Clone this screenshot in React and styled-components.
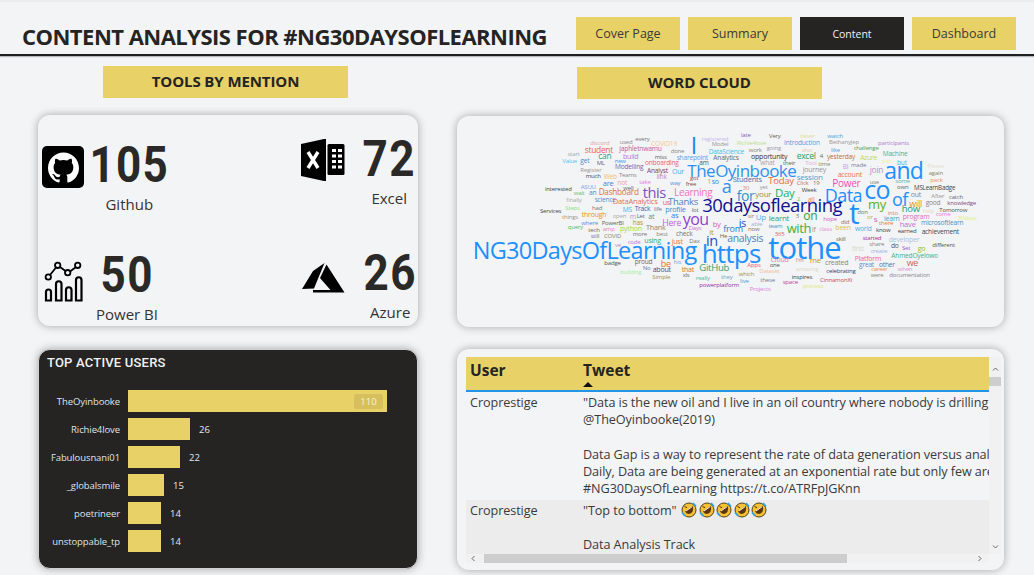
import React from "react";
import styled, { createGlobalStyle } from "styled-components";
import { SiGithub } from "react-icons/si";

const Global = createGlobalStyle`
  html, body { margin: 0; padding: 0; background: #f3f4f6; }
  body { font-family: "Open Sans", "Noto Sans", sans-serif; color: #252423; }
`;
const Y = "#e8d166";
const Page = styled.div`width: 1034px; height: 575px; overflow: hidden; background: #f3f4f6; border-top: 2px solid #ececee; box-sizing: border-box;`;
const Header = styled.header`display: flex; justify-content: space-between; height: 54px; box-sizing: border-box; padding: 15px 18px 0 22px; border-bottom: 2px solid #1f1f1f; box-shadow: 0 1px 1px #b5b7bb;`;
const Title = styled.h1`margin: 5px 0 0; font-size: 22px; line-height: 28px; font-weight: 700; letter-spacing: -0.52px; white-space: nowrap;`;
const Nav = styled.nav`display: flex; gap: 8px; height: 33px;`;
const NavButton = styled.div`
  width: 104px; display: flex; align-items: center; justify-content: center;
  background: ${p => (p.$active ? "#252423" : Y)}; color: ${p => (p.$active ? "#f2f2f2" : "#3a3a38")};
  font-size: ${p => (p.$active ? "10.5px" : "12.5px")};
`;
const Body = styled.main`display: grid; grid-template-columns: 380px 547px; column-gap: 39px; padding-left: 38px;`;
const Column = styled.section`display: flex; flex-direction: column; align-items: flex-start;`;
const SectionBar = styled.div`
  width: 245px; height: 32px; box-sizing: border-box; padding-bottom: 2px; margin: ${p => p.$top}px 0 17px ${p => p.$left}px; background: ${Y};
  display: flex; align-items: center; justify-content: center; font-size: 15px; font-weight: 700; letter-spacing: -0.1px;
`;
const Card = styled.div`
  width: 100%; height: ${p => p.$h}px; margin-top: ${p => p.$top || 0}px; box-sizing: border-box; position: relative;
  border-radius: 12px; background: #f3f4f6; box-shadow: 0 0 9px rgba(0,0,0,.32); overflow: hidden;
`;
const StatsGrid = styled.div`display: grid; grid-template-columns: 259px 117px; grid-template-rows: 118px 93px; padding-left: 4px;`;
const Stat = styled.div`display: flex; align-items: flex-start; gap: ${p => p.$gap}px; padding-top: ${p => p.$pad}px;`;
const StatIcon = styled.div`display: flex; margin-top: ${p => p.$top}px; width: ${p => p.$w}px; flex: none; justify-content: center;`;
const StatText = styled.div`display: flex; flex-direction: column; align-items: center;`;
const StatNum = styled.div`
  font-family: Roboto, sans-serif; font-weight: 700; font-size: 50px; line-height: 50px; color: #2a2928;
  transform: scaleX(.88); letter-spacing: 1.5px;
`;
const StatLabel = styled.div`font-size: 15px; line-height: 20px; margin-top: ${p => p.$top}px; color: #333;`;
const GithubBox = styled.div`
  width: 42px; height: 42px; border-radius: 5px; background: #000; color: #fff; display: flex; align-items: center; justify-content: center;
`;

const Cloud = styled.div`position: absolute; inset: 0;`;
const Word = styled.span`
  position: absolute; left: ${p => p.$x}px; top: ${p => p.$y}px; transform: translateY(-50%);
  font-size: ${p => p.$s}px; line-height: 1; color: ${p => p.$c}; white-space: nowrap; letter-spacing: -0.03em;
`;

const A = [
["discord",390,83,6,"#d9a9a9"],["used",479,80,6,"#8a8a8a"],["every",526,72,6,"#777"],["COVID19",573,86,6.6,"#f5c890"],["registered",725,72,6,"#c9b8f0"],["Model",755,88,6,"#999"],
["I",692,90,23,"#1e88e5"],["student",374,105,8.4,"#f06060"],["japhletnwamu",478,102,6.7,"#c060a0"],["done",632,107,6,"#888"],["DataScience",746,110,6.6,"#40c0e8"],["start",323,116,6,"#9aa"],
["can",415,124,8.3,"#20a080"],["build",489,122,7,"#c070e0"],["miss",584,125,6,"#666"],["sharepoint",650,128,6.6,"#60a0f0"],["Analytics",760,130,6.6,"#666"],["Value",307,137,6,"#50c0f0"],["get",361,138,6.6,"#4090d0"],
["ML",410,143,6,"#668"],["new",464,138,6,"#5090f0"],["onboarding",555,144,6.6,"#f06070"],["am",718,143,6.6,"#555"],["Register",361,164,6,"#999"],["Modelling",465,157,6.6,"#8060a0"],["Analyst",561,167,6.6,"#804060"],["Our",636,167,7,"#40b0f0"],
["TheOyinbooke",682,165,17,"#3090f0"],["much",377,183,6,"#446"],["Web",431,187,6.6,"#f0c070"],["Teams",477,180,6,"#888"],["link",590,187,6.6,"#c080d0"],["got",690,190,6,"#a05050"],["ASUU",362,215,6,"#80a0e0"],["not",472,203,6.6,"#f0a0b0"],
["take",538,200,6,"#e080e0"],["way",630,204,6,"#5090e0"],["free",677,208,6,"#805040"],["1",742,198,7,"#a0c030"],["so",755,198,7,"#4080e0"],["interested",255,221,6,"#444"],["wait",341,233,6,"#70c070"],["an",387,233,6.6,"#4090d0"],["well",490,218,6,"#666"],
["are",428,207,7.6,"#5080e0"],["Dashboard",416,232,8.2,"#e07030"],["this",548,230,14.7,"#8050c0"],["Learning",642,230,10,"#f070c0"],["a",785,212,18,"#3090f0"],["finally",319,254,6,"#aaa"],["science",404,256,6.6,"#5090d0"],["Services",240,287,6,"#445"],
["Steps",316,278,6,"#90e080"],["had",396,278,6,"#776"],["DataAnalytics",458,262,7.6,"#e07060"],["us",608,262,7,"#e06080"],["Thanks",624,261,9.5,"#5080c0"],["30daysoflearning",727,270,18.5,"#101090"],["things",306,305,6,"#998"],["through",365,296,7,"#f09020"],
["MS",488,286,6.6,"#40b0f0"],["Track",524,283,6.6,"#3060b0"],["life",582,283,6,"#777"],["profile",616,286,7.2,"#3090d0"],["lot",695,284,6,"#666"],["open",458,303,6,"#aaa"],["m",509,302,7,"#c090e0"],["Let",530,304,6,"#666"],["at",565,304,7,"#30a0a0"],["as",633,304,7.5,"#3080f0"],
["you",668,312,16,"#9040d0"],["query",323,337,6,"#50c060"],["where",364,323,6,"#5090e0"],["PowerBI",425,323,6,"#665"],["has",518,323,6.6,"#c09020"],["Here",607,323,8.7,"#c060e0"],["by",758,330,7.5,"#d060c0"],["tech",385,344,6,"#666"],["amp",428,341,6,"#e090a0"],["python",480,340,7,"#a0e040"],
["Thank",558,339,7.2,"#887"],["Days",686,338,6,"#d070d0"],["still",392,362,6,"#777"],["COVID",432,364,6,"#885"],["more",518,358,6,"#777"],["best",589,358,6,"#887"],["check",648,357,6.6,"#776"],["it",748,352,8,"#c0a000"],["He",779,362,6,"#665"],["from",790,340,9,"#2080d0"],
["using",553,376,7,"#30b070"],["just",635,377,7,"#e08020"],["Dax",688,379,6,"#776"],["in",738,378,14.5,"#2050c0"],["ve",465,389,6,"#c090c0"],["code",503,382,6,"#c070e0"],["NG30DaysOfLearning",38,407,23.5,"#1e90ff"],["https",725,413,26,"#1e90ff"],
["badge",433,443,6,"#555"],["proud",524,440,6.6,"#906050"],["be",602,443,9,"#f07020"],["his",641,442,6,"#80a0d0"],["No",548,458,6,"#7080b0"],["about",578,462,7,"#604080"],["that",665,462,7,"#c08030"],["GitHub",718,460,9.5,"#30a070"],["building",481,470,6,"#a0f0a0"],
["Simple",577,485,6,"#a09050"],["xls",668,482,5.8,"#666"],["really",707,489,6,"#50c0a0"],["they",783,485,6,"#80a0c0"],["powerplatform",718,510,6,"#9030b0"],
];
const B = [
["late",33,59,6,"#8060c0"],["Very",117,63,6,"#665"],["never",210,62,6,"#e0e090"],["watch",292,62,6,"#50a0e0"],["Richie4love",20,83,6,"#c0e090"],["Introduction",162,83,6.6,"#50a0e0"],["BethanyJep",297,81,6,"#999"],["participants",444,84,6,"#b080d0"],
["work",56,104,6,"#887"],["going",110,99,6,"#99a"],["also",215,104,6,"#e0d0c0"],["like",303,106,6,"#50a0e0"],["challenge",371,100,6,"#50a050"],["Machine",458,118,6.6,"#50b090"],["opportunity",63,122,7,"#333"],["excel",200,123,8.5,"#20a060"],["4",269,124,6,"#665"],["yesterday",291,125,6.6,"#c07040"],
["Azure",391,130,6.6,"#c0e040"],["part",455,137,6,"#f0f0a0"],["what",91,144,6.6,"#b0a0a0"],["their",159,143,6,"#665"],["Tool",226,143,6,"#e0b0e0"],["time",265,146,6,"#887"],["BI",338,155,6.6,"#c0a0e0"],["made",363,150,6,"#8080a0"],["but",501,143,6.6,"#50b0f0"],["Please",592,152,6,"#e8e0d0"],
["journey",218,161,7,"#999"],["join",419,165,8.5,"#c090d0"],["and",463,165,23,"#1e90ff"],["again",596,174,6,"#886"],["account",323,178,7,"#f07050"],["pack",601,194,6,"#f09060"],["Click",200,205,6,"#c07060"],["19",249,205,6,"#777"],["Today",115,198,9.5,"#e07030"],["session",200,186,8,"#50a0d0"],
["Students",8,196,7.5,"#5070a0"],["some",496,198,6,"#60b0a0"],["use",419,200,6,"#887"],["own",501,215,6,"#665"],["MSLearnBadge",552,218,6.2,"#444"],["Power",307,203,10,"#f050b0"],["30",38,218,6,"#e08080"],["yet",89,216,6,"#999"],["your",76,237,8,"#a09040"],["Week",215,226,6,"#444"],
["Day",135,235,11.5,"#20b060"],["out",542,238,7,"#888"],["After",604,243,6,"#999"],["catch",657,245,6,"#667"],["for",20,243,14,"#3090d0"],["Data",284,240,18,"#1e90ff"],["co",403,222,25,"#1e90ff"],["of",486,253,18,"#1e90ff"],["how",515,282,9.5,"#20a070"],["will",538,263,9,"#f09020"],["good",587,264,6.6,"#888"],
["knowledge",652,264,6,"#805080"],["2",201,252,6,"#90c040"],["all",233,253,7,"#f09020"],["my",414,267,13,"#60b020"],["Tomorrow",628,285,6,"#555"],["help",578,287,6,"#e8d8c8"],["come",617,297,6,"#e080e0"],["30days",684,308,6,"#e0f080"],["t",357,295,30,"#1e90ff"],["don",382,290,6,"#777"],
["into",473,293,6,"#d09070"],["or",411,306,6,"#b0b040"],["s",431,313,8,"#d060c0"],["learn",462,308,7,"#50a0d0"],["program",518,303,7,"#e070c0"],["on",220,303,12,"#30a040"],["sir",53,302,6,"#888"],["Up",77,306,8,"#50b0f0"],["learnt",116,308,8,"#40a060"],["3",197,302,6,"#776"],["hope",280,311,6,"#d060c0"],
["did",333,320,6,"#907070"],["been",316,335,7,"#e0c050"],["there",447,323,6,"#e08030"],["microsoftlearn",573,323,6.6,"#5090c0"],["is",26,322,11,"#2050c0"],["able",63,326,6,"#a0b0e0"],["team",116,333,6,"#5090c0"],["with",170,338,13,"#40b040"],["If",245,341,7,"#998"],["class",268,341,6,"#e090d0"],
["world",375,341,6.6,"#50b0e0"],["know",438,344,6,"#445"],["have",509,331,7.6,"#c070e0"],["earned",503,348,6,"#445"],["achievement",575,350,6.6,"#445"],["now",54,343,6,"#776"],["analysis",-8,368,10.4,"#5080c0"],["365",134,358,6,"#e06060"],["started",398,368,6,"#a03090"],["developer",476,371,7,"#b0c0e0"],
["skill",318,371,6,"#707030"],["tothe",115,395,31,"#1e90ff"],["first",366,400,7,"#d8d8c8"],["share",418,387,6,"#888"],["do",483,392,6.6,"#555"],["different",607,389,6,"#506040"],["Set",516,400,6,"#9060d0"],["go",563,400,7,"#90c020"],["create",422,407,6,"#a0b0e8"],["AhmedOyelowo",484,422,6.6,"#40b090"],
["Cloud",122,433,7,"#e080a0"],["I'm",197,436,6,"#c08080"],["me",239,439,7.8,"#c0a000"],["Platform",374,430,7,"#f060a0"],["we",530,441,9,"#d06060"],["created",285,442,7,"#887"],["Apps",52,449,6,"#f06060"],["one",119,449,6,"#555"],["great",387,449,6.6,"#6090d0"],["other",447,449,6.6,"#6070a0"],
["which",26,478,6,"#a09040"],["Dataset",88,469,6,"#f0c090"],["amazing",198,461,6,"#e0d8c8"],["when",503,461,6,"#e090d0"],["career",424,464,5.8,"#f09040"],["celebrating",289,469,6,"#404070"],["were",422,482,5.8,"#887"],["documentation",478,479,6,"#888"],["live",30,497,6,"#50a0e0"],["these",91,494,6,"#7080a0"],
["inspires",185,485,6,"#444"],["space",158,501,6,"#c040a0"],["CinnamonXi",270,494,6,"#c05060"],["process",218,513,6,"#e0e880"],["Projects",59,521,6,"#e080e0"],
];
const words = [
  ...A.map(([t, x, y, s, c]) => ({ t, x: 3 + x / 3, y: y / 3 - 1, s, c })),
  ...B.map(([t, x, y, s, c]) => ({ t, x: 273 + x / 3, y: y / 3 - 1, s, c })),
];

const DarkCard = styled(Card)`background: #252423; border: 1px solid #cfcfcf; padding: 5px 8px 0;`;
const ChartTitle = styled.h2`margin: 0 0 20px; font-family: Roboto, sans-serif; font-weight: 500; font-size: 13px; line-height: 15px; color: #f2f2f2; letter-spacing: .2px;`;
const BarList = styled.div`display: flex; flex-direction: column; gap: 6px;`;
const BarRow = styled.div`display: grid; grid-template-columns: 73px auto 1fr; column-gap: 8px; align-items: center; height: 22px; font-size: 9.5px; color: #dfe3ea;`;
const BarLabel = styled.div`text-align: right; white-space: nowrap; letter-spacing: -.1px;`;
const Bar = styled.div`height: 22px; background: ${Y}; display: flex; align-items: center; justify-content: flex-end; padding-right: 4px; box-sizing: border-box;`;
const BarValue = styled.div`font-size: 9.5px; padding-left: 1px; color: #e6e8ee;`;
const BarBadge = styled.div`width: 29px; height: 15px; border-radius: 2px; background: rgba(60,50,20,.1); color: #f7f1d6; font-size: 9.5px; display: flex; align-items: center; justify-content: center;`;

const TableGrid = styled.div`
  display: grid; grid-template-columns: 523px 12px; grid-template-rows: 197px 9px; height: 100%;
  box-sizing: border-box; padding: 8px 0 0 9px;
`;
const TableMain = styled.div`overflow: hidden; height: 197px;`;
const HeadRow = styled.div`display: grid; grid-template-columns: 113px 1fr; height: 35px; background: ${Y}; border-bottom: 2px solid #2196e8; box-sizing: border-box; padding-left: 4px; font-weight: 700; font-size: 15.5px; color: #252423;`;
const HeadCell = styled.div`padding-top: 2px; line-height: 22px; display: flex; flex-direction: column; align-items: flex-start;`;
const SortMark = styled.i`display: block; width: 0; height: 0; border-left: 5.5px solid transparent; border-right: 5.5px solid transparent; border-bottom: 5px solid #111; margin-top: 1px;`;
const Row = styled.div`display: grid; grid-template-columns: 113px 1fr; padding: 2px 0 2px 4px; background: ${p => (p.$alt ? "#ececec" : "transparent")}; font-size: 12.65px; line-height: 17.3px; color: #3b3a39; letter-spacing: -.08px;`;
const Cell = styled.div`white-space: pre; overflow: hidden;`;
const Emoji = styled.svg`vertical-align: -3px; margin-left: 1.5px;`;
const VScroll = styled.div`display: flex; flex-direction: column; align-items: center; justify-content: space-between; height: 197px; background: #f1f1f2; box-sizing: border-box; padding: 9px 0 4px;`;
const VThumb = styled.div`width: 100%; height: 9px; background: #cdcdcd; margin-bottom: auto; margin-top: 4px;`;
const HScroll = styled.div`display: flex; align-items: center; background: #f1f1f2; height: 9px; padding: 0 6px 0 4px; gap: 7px;`;
const HThumb = styled.div`width: 363px; height: 9px; background: #cdcdcd; margin-right: auto;`;
const Chevron = styled.svg`display: block; flex: none;`;

const GithubIcon = () => <GithubBox><SiGithub size={31} /></GithubBox>;
const ExcelIcon = () => (
  <svg width="44" height="42" viewBox="6 4 44 42">
    <path d="M6 9 L29 4 H31 V46 H29 L6 41 Z" fill="#000" />
    <path d="M13 17 L23 33 M23 17 L13 33" stroke="#fff" strokeWidth="3.4" />
    <rect x="32.500" y="9" width="17" height="31" rx="1.500" fill="#000" />
    <path d="M37 14h4v3h-4zM43 14h4v3h-4zM37 19.500h4v3h-4zM43 19.500h4v3h-4zM37 25h4v3h-4zM43 25h4v3h-4zM37 30.500h4v3h-4zM43 30.500h4v3h-4z" fill="#fff" />
  </svg>
);
const PowerBIIcon = () => (
  <svg width="39" height="43" viewBox="3 3 39 43" fill="none" stroke="#000" strokeWidth="1.8">
    <path d="M9 18 L15 10.500 M19 10 L24.500 14 M29 14.500 L35 10" />
    <circle cx="7.300" cy="20" r="2.700" /><circle cx="16.700" cy="8.300" r="2.700" /><circle cx="26.700" cy="15.700" r="2.700" /><circle cx="36.700" cy="8.300" r="2.700" />
    <path strokeWidth="2.2" d="M5 43.500 V35 a2.500 2.500 0 0 1 5 0 V43.500 Z M15 43.500 V27 a2.700 2.700 0 0 1 5.500 0 V43.500 Z M25 43.500 V33 a2.700 2.700 0 0 1 5.500 0 V43.500 Z M35 43.500 V23 a2.700 2.700 0 0 1 5.500 0 V43.500 Z" />
  </svg>
);
const AzureIcon = () => (
  <svg width="44" height="32" viewBox="4 4 44 32">
    <path d="M27.500 5 L16 13 L5 31 L17 30.500 Z M29.500 6.500 L47.500 34.500 L16 34.500 L16 32 L33.500 32 L23 20 Z" fill="#000" />
  </svg>
);
const LaughEmoji = () => (
  <Emoji width="16" height="16" viewBox="0 0 16 16">
    <circle cx="8" cy="8" r="7" fill="#f6c030" stroke="#4f4320" strokeWidth="1" />
    <path d="M4 9.500 L11.500 4 Q13.500 9 9.500 11.500 Q6 13 4 9.500 Z" fill="#5a3410" />
    <path d="M5 9 L11 4.800" stroke="#fff" strokeWidth=".9" />
    <path d="M3.500 4.500 l2.500 1.200" stroke="#5a3410" strokeWidth="1" />
    <path d="M1 10.500 l3 3.500 M12 1 l3 3.500" stroke="#2aa3e8" strokeWidth="1.800" />
  </Emoji>
);
const Chev = ({ d }) => (
  <Chevron width="7" height="7" viewBox="0 0 7 7" fill="none" stroke="#666" strokeWidth="1">
    <path d={d} />
  </Chevron>
);

const users = [
  ["TheOyinbooke", 259, 110], ["Richie4love", 62, 26], ["Fabulousnani01", 52, 22],
  ["_globalsmile", 36, 15], ["poetrineer", 33, 14], ["unstoppable_tp", 33, 14],
];

export default function App() {
  return (
    <Page>
      <Global />
      <Header>
        <Title>CONTENT ANALYSIS FOR #NG30DAYSOFLEARNING</Title>
        <Nav>
          <NavButton>Cover Page</NavButton>
          <NavButton>Summary</NavButton>
          <NavButton $active>Content</NavButton>
          <NavButton>Dashboard</NavButton>
        </Nav>
      </Header>
      <Body>
        <Column>
          <SectionBar $top={10} $left={65}>TOOLS BY MENTION</SectionBar>
          <Card $h={211}>
            <StatsGrid>
              <Stat $gap={0} $pad={25}>
                <StatIcon $w={42} $top={6}><GithubIcon /></StatIcon>
                <StatText><StatNum>105</StatNum><StatLabel $top={4}>Github</StatLabel></StatText>
              </Stat>
              <Stat $gap={14} $pad={19}>
                <StatIcon $w={44} $top={5}><ExcelIcon /></StatIcon>
                <StatText><StatNum>72</StatNum><StatLabel $top={4}>Excel</StatLabel></StatText>
              </Stat>
              <Stat $gap={12} $pad={17}>
                <StatIcon $w={42} $top={10}><PowerBIIcon /></StatIcon>
                <StatText><StatNum>50</StatNum><StatLabel $top={4}>Power BI</StatLabel></StatText>
              </Stat>
              <Stat $gap={15} $pad={15}>
                <StatIcon $w={44} $top={14}><AzureIcon /></StatIcon>
                <StatText><StatNum>26</StatNum><StatLabel $top={4}>Azure</StatLabel></StatText>
              </Stat>
            </StatsGrid>
          </Card>
          <DarkCard $h={220} $top={23}>
            <ChartTitle>TOP ACTIVE USERS</ChartTitle>
            <BarList>
              {users.map(([n, w, v], i) => (
                <BarRow key={n}>
                  <BarLabel>{n}</BarLabel>
                  <Bar style={{ width: w }}>{i === 0 && <BarBadge>{v}</BarBadge>}</Bar>
                  {i !== 0 && <BarValue>{v}</BarValue>}
                </BarRow>
              ))}
            </BarList>
          </DarkCard>
        </Column>
        <Column>
          <SectionBar $top={11} $left={120}>WORD CLOUD</SectionBar>
          <Card $h={211}>
            <Cloud>
              {words.map((w, i) => (
                <Word key={i} $x={w.x} $y={w.y} $s={w.s} $c={w.c}>{w.t}</Word>
              ))}
            </Cloud>
          </Card>
          <Card $h={221} $top={22}>
            <TableGrid>
              <TableMain>
                <HeadRow>
                  <HeadCell>User</HeadCell>
                  <HeadCell>Tweet<SortMark /></HeadCell>
                </HeadRow>
                <Row>
                  <Cell>Croprestige</Cell>
                  <Cell>{`"Data is the new oil and I live in an oil country where nobody is drilling
@TheOyinbooke(2019)

Data Gap is a way to represent the rate of data generation versus analysis
Daily, Data are being generated at an exponential rate but only few are
#NG30DaysOfLearning https://t.co/ATRFpJGKnn`}</Cell>
                </Row>
                <Row $alt>
                  <Cell>Croprestige</Cell>
                  <Cell>{`"Top to bottom" `}<LaughEmoji /><LaughEmoji /><LaughEmoji /><LaughEmoji /><LaughEmoji />{`

Data Analysis Track`}</Cell>
                </Row>
              </TableMain>
              <VScroll>
                <Chev d="M1 4.500 L3.500 2 L6 4.500" />
                <VThumb />
                <Chev d="M1 2.500 L3.500 5 L6 2.500" />
              </VScroll>
              <HScroll>
                <Chev d="M4.500 1 L2 3.500 L4.500 6" />
                <HThumb />
                <Chev d="M2.500 1 L5 3.500 L2.500 6" />
              </HScroll>
            </TableGrid>
          </Card>
        </Column>
      </Body>
    </Page>
  );
}
